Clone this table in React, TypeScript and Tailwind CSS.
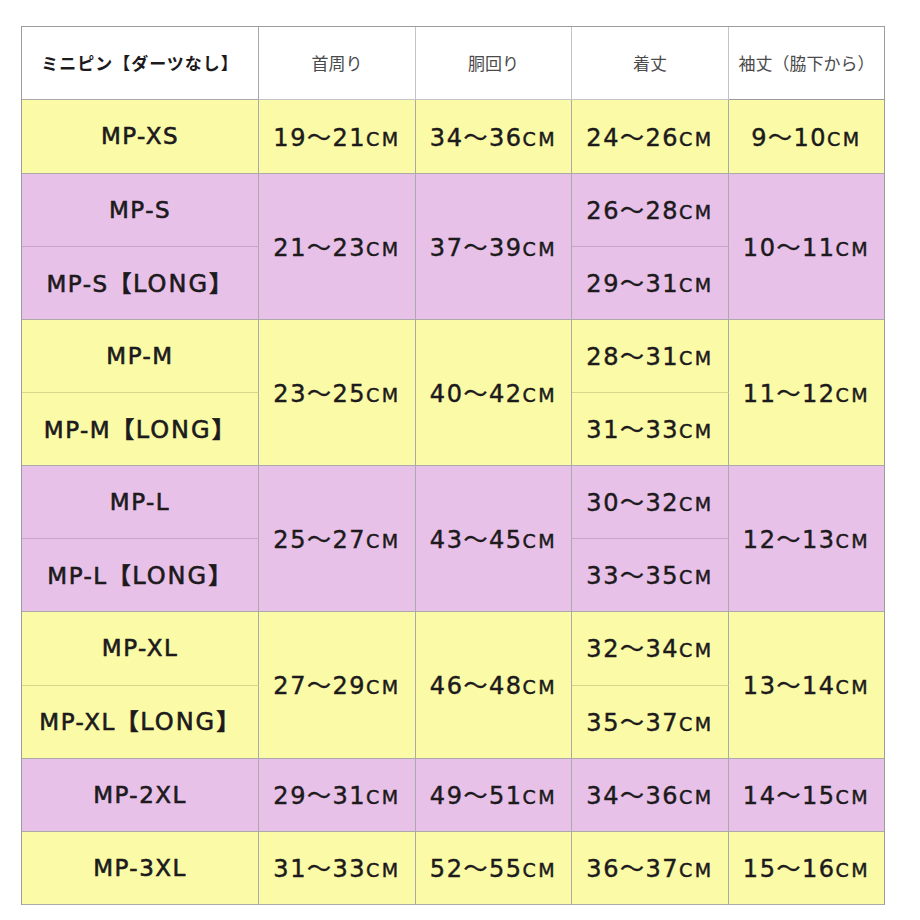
const YELLOW = 'bg-[#fbfaa6]'
const PINK = 'bg-[#e8c1e8]'

function Cm({ range }: { range: string }) {
  const [a, b] = range.split('~')
  return (
    <span className="tracking-[1.5px] [-webkit-text-stroke:0.45px_#1c1a1c]">
      <span className="text-[24px]">{a}</span>
      <span className="text-[24px] font-['Noto_Sans_CJK_JP',sans-serif]">～</span>
      <span className="text-[24px]">{b}</span>
      <span className="text-[19px] tracking-[2.5px]">CM</span>
    </span>
  )
}

function Size({ name, long }: { name: string; long?: boolean }) {
  return (
    <span className="text-[23px] tracking-[1.5px] [-webkit-text-stroke:0.6px_#1c1a1c]">
      {name}
      {long && (
        <>
          <span className="font-['Noto_Sans_CJK_JP',sans-serif] font-bold">【</span>
          <span className="text-[24px] tracking-[2px]">LONG</span>
          <span className="font-['Noto_Sans_CJK_JP',sans-serif] font-bold">】</span>
        </>
      )}
    </span>
  )
}

const groups = [
  { bg: YELLOW, size: 'MP-XS', neck: '19~21', waist: '34~36', len: ['24~26'], sleeve: '9~10' },
  { bg: PINK, size: 'MP-S', neck: '21~23', waist: '37~39', len: ['26~28', '29~31'], sleeve: '10~11' },
  { bg: YELLOW, size: 'MP-M', neck: '23~25', waist: '40~42', len: ['28~31', '31~33'], sleeve: '11~12' },
  { bg: PINK, size: 'MP-L', neck: '25~27', waist: '43~45', len: ['30~32', '33~35'], sleeve: '12~13' },
  { bg: YELLOW, size: 'MP-XL', neck: '27~29', waist: '46~48', len: ['32~34', '35~37'], sleeve: '13~14' },
  { bg: PINK, size: 'MP-2XL', neck: '29~31', waist: '49~51', len: ['34~36'], sleeve: '14~15' },
  { bg: YELLOW, size: 'MP-3XL', neck: '31~33', waist: '52~55', len: ['36~37'], sleeve: '15~16' },
]

const headers = ['首周り', '胴回り', '着丈', '袖丈（脇下から）']

export default function App() {
  return (
    <div className="min-h-[920px] w-[920px] bg-white pl-[21px] pt-[26px] font-['DejaVu_Sans','Noto_Sans_CJK_JP',sans-serif] text-[#1c1a1c]">
      <div className="grid w-[864px] grid-cols-[237px_157px_156px_157px_156px] grid-rows-[73px_74px_73px_73px_73px_73px_73px_73px_73px_74px_73px_73px] border-l border-t border-[#9c9c9c]">
        <div className="flex items-center justify-center border-b border-r border-[#a8a8a8] font-['Noto_Sans_CJK_JP',sans-serif] text-[17px] font-bold tracking-[1px]">
          ミニピン【ダーツなし】
        </div>
        {headers.map((h, i) => (
          <div
            key={h}
            className={`flex items-center justify-center border-b border-r font-['Noto_Sans_CJK_JP',sans-serif] text-[17px] text-[#4a4a4a] ${
              i === 3 ? 'border-[#9c9c9c]' : 'border-[#c4c4c4]'
            }`}
          >
            {h}
          </div>
        ))}

        {groups.map((g) => {
          const split = g.len.length === 2
          const span = split ? 'row-span-2' : ''
          const inner = g.bg === YELLOW ? 'border-b-[#d6d68c]' : 'border-b-[#c9a3c9]'
          const cell = `flex items-center justify-center border-r border-b border-[#aaaaaa] ${g.bg}`
          return (
            <div key={g.size} className="contents">
              {split ? (
                <div className="row-span-2 grid grid-rows-2">
                  <div className={`${cell} ${inner}`}>
                    <Size name={g.size} />
                  </div>
                  <div className={cell}>
                    <Size name={g.size} long />
                  </div>
                </div>
              ) : (
                <div className={cell}>
                  <Size name={g.size} />
                </div>
              )}
              <div className={`${cell} ${span}`}>
                <Cm range={g.neck} />
              </div>
              <div className={`${cell} ${span}`}>
                <Cm range={g.waist} />
              </div>
              {split ? (
                <div className="row-span-2 grid grid-rows-2">
                  <div className={`${cell} ${inner}`}>
                    <Cm range={g.len[0]} />
                  </div>
                  <div className={cell}>
                    <Cm range={g.len[1]} />
                  </div>
                </div>
              ) : (
                <div className={cell}>
                  <Cm range={g.len[0]} />
                </div>
              )}
              <div className={`${cell} ${span} border-r-[#9c9c9c]`}>
                <Cm range={g.sleeve} />
              </div>
            </div>
          )
        })}
      </div>
    </div>
  )
}
